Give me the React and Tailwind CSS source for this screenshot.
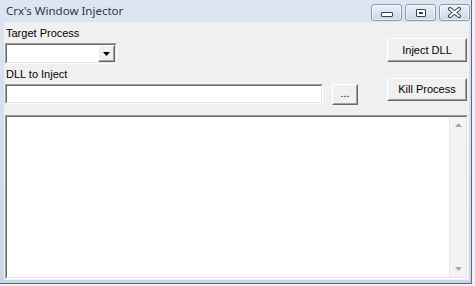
import React from "react";

function Sunken({ className = "", innerClassName = "", children }) {
  return (
    <div className={"border border-t-[#a0a0a0] border-l-[#a0a0a0] border-r-white border-b-white " + className}>
      <div className={"w-full h-full border border-t-[#696969] border-l-[#696969] border-r-[#e3e3e3] border-b-[#e3e3e3] bg-white " + innerClassName}>
        {children}
      </div>
    </div>
  );
}

function Raised({ className = "", children }) {
  return (
    <div className={"border border-t-white border-l-white border-r-[#696969] border-b-[#696969] " + className}>
      <div className="w-full h-full border border-t-[#f0f0f0] border-l-[#f0f0f0] border-r-[#a0a0a0] border-b-[#a0a0a0] bg-[#f0f0f0] flex items-center justify-center">
        {children}
      </div>
    </div>
  );
}

function CaptionButton({ children, className = "" }) {
  return (
    <div className={"h-[17px] rounded-[3px] border border-[#8a9bb1] bg-gradient-to-b from-[#e9f0f8] via-[#dbe5f0] to-[#cad7e6] flex items-center justify-center shadow-[inset_0_0_0_1px_rgba(255,255,255,0.6)] " + className}>
      {children}
    </div>
  );
}

export default function App() {
  return (
    <div className="w-[475px] h-[286px] bg-[#eef2f7] overflow-hidden font-['Liberation_Sans',Arial,sans-serif]">
      <div className="w-[472px] h-[284px] flex flex-col bg-gradient-to-b from-[#dce6f2] to-[#c9d7e7] border-r border-b border-[#5d6c7d]">
        {/* Title bar */}
        <div className="h-[22px] flex items-start shrink-0">
          <span className="pl-[6px] pt-[4px] text-[11.5px] leading-[14px] text-[#2e3844] font-['Noto_Sans',sans-serif]">
            Crx's Window Injector
          </span>
          <div className="ml-auto mr-[1px] pt-[4px] flex gap-[3px]">
            <CaptionButton className="w-[31px]">
              <div className="w-[12px] h-[5px] rounded-[1px] border border-[#36404d] bg-white mt-[3px]" />
            </CaptionButton>
            <CaptionButton className="w-[31px]">
              <div className="w-[10px] h-[8px] rounded-[1px] border border-[#36404d] bg-white flex items-center justify-center">
                <div className="w-[4px] h-[2px] border border-[#36404d]" />
              </div>
            </CaptionButton>
            <CaptionButton className="w-[31px]">
              <svg width="15" height="11" viewBox="0 0 15 11">
                <path d="M3 2 L12 9 M12 2 L3 9" stroke="#3a4552" strokeWidth="4" strokeLinecap="round" fill="none" />
                <path d="M3 2 L12 9 M12 2 L3 9" stroke="#ffffff" strokeWidth="2" strokeLinecap="round" fill="none" />
              </svg>
            </CaptionButton>
          </div>
        </div>

        {/* Client area */}
        <div className="flex-1 ml-[4px] mr-[2px] mb-[3px] bg-[#f0f0f0] flex flex-col text-[11px] text-black">
          <div className="flex shrink-0">
            <div className="pl-[1px] flex flex-col">
              <div className="mt-[4px] h-[14px] leading-[14px] pl-[1px]">Target Process</div>
              <Sunken className="mt-[3px] w-[112px] h-[21px]" innerClassName="flex justify-end">
                <Raised className="w-[17px] h-full">
                  <svg width="7" height="4" viewBox="0 0 7 4">
                    <path d="M0 0 H7 L3.5 4 Z" fill="#000" />
                  </svg>
                </Raised>
              </Sunken>
              <div className="mt-[3px] h-[14px] leading-[14px] pl-[1px]">DLL to Inject</div>
              <div className="mt-[3px] flex items-start">
                <Sunken className="w-[318px] h-[20px]" />
                <Raised className="ml-[9px] w-[26px] h-[21px]">
                  <span className="leading-none -mt-[3px]">...</span>
                </Raised>
              </div>
            </div>
            <div className="ml-auto mr-[2px] flex flex-col">
              <Raised className="mt-[16px] w-[80px] h-[24px]">
                <span className="leading-none">Inject DLL</span>
              </Raised>
              <Raised className="mt-[16px] w-[80px] h-[23px]">
                <span className="leading-none">Kill Process</span>
              </Raised>
            </div>
          </div>

          <Sunken className="mt-[10px] ml-[1px] mr-[1px] mb-[1px] flex-1" innerClassName="flex justify-end">
            <div className="w-[17px] h-full bg-[#f3f3f3] border-l border-[#e8e8e8] flex flex-col items-center justify-between py-[6px]">
              <svg width="7" height="4" viewBox="0 0 7 4">
                <path d="M0 4 H7 L3.5 0 Z" fill="#a6a6a6" />
              </svg>
              <svg width="7" height="4" viewBox="0 0 7 4">
                <path d="M0 0 H7 L3.5 4 Z" fill="#a6a6a6" />
              </svg>
            </div>
          </Sunken>
        </div>
      </div>
    </div>
  );
}
